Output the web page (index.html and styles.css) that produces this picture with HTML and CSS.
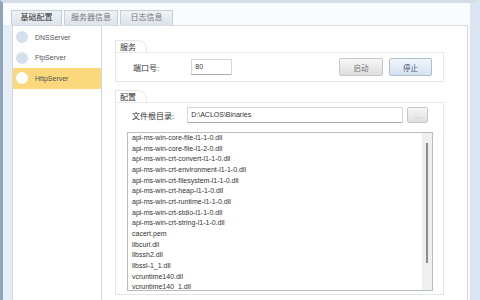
FILE: index.html
```html
<!DOCTYPE html>
<html lang="zh-CN">
<head>
    <meta charset="UTF-8">
    <title>服务器配置</title>
    <link rel="stylesheet" href="styles.css">
</head>
<body>
    <div class="window">
        <div class="tabs">
            <div class="tab active">基础配置</div>
            <div class="tab">服务器信息</div>
            <div class="tab">日志信息</div>
        </div>
        <div class="main">
            <ul class="server-list">
                <li class="server"><span class="dot"></span>DNSServer</li>
                <li class="server"><span class="dot"></span>FtpServer</li>
                <li class="server selected"><span class="dot"></span>HttpServer</li>
            </ul>
            <div class="panel">
                <div class="group">
                    <div class="group-title">服务</div>
                    <div class="group-body service-row">
                        <label class="field-label">端口号:</label>
                        <div class="input port">80</div>
                        <div class="spacer"></div>
                        <button class="btn">启动</button>
                        <button class="btn btn-blue">停止</button>
                    </div>
                </div>
                <div class="group">
                    <div class="group-title">配置</div>
                    <div class="group-body config-body">
                        <div class="path-row">
                            <label class="field-label">文件根目录:</label>
                            <div class="input path">D:\ACLOS\Binaries</div>
                            <button class="btn btn-small">...</button>
                        </div>
                        <div class="file-box">
                            <ul class="file-list" id="fileList"></ul>
                            <div class="scrollbar"><div class="thumb"></div></div>
                        </div>
                    </div>
                </div>
            </div>
        </div>
    </div>

    <script>
        const files = [
            'api-ms-win-core-file-l1-1-0.dll',
            'api-ms-win-core-file-l1-2-0.dll',
            'api-ms-win-crt-convert-l1-1-0.dll',
            'api-ms-win-crt-environment-l1-1-0.dll',
            'api-ms-win-crt-filesystem-l1-1-0.dll',
            'api-ms-win-crt-heap-l1-1-0.dll',
            'api-ms-win-crt-runtime-l1-1-0.dll',
            'api-ms-win-crt-stdio-l1-1-0.dll',
            'api-ms-win-crt-string-l1-1-0.dll',
            'cacert.pem',
            'libcurl.dll',
            'libssh2.dll',
            'libssl-1_1.dll',
            'vcruntime140.dll',
            'vcruntime140_1.dll'
        ];
        const fileList = document.getElementById('fileList');
        files.forEach(name => {
            const li = document.createElement('li');
            li.textContent = name;
            fileList.appendChild(li);
        });
    </script>
</body>
</html>
```

FILE: styles.css
```css
* { margin: 0; padding: 0; box-sizing: border-box; }
body { width: 480px; height: 300px; overflow: hidden; background: #fff; font-family: "Liberation Sans", "Noto Sans CJK SC", sans-serif; color: #444; }
.window { height: 300px; display: flex; flex-direction: column; border-top: 3px solid #d3dde8; border-left: 3px solid #8ea4bc; border-right: 10px solid #d9e5f1; background: #fafbfd; }
.tabs { display: flex; gap: 2px; height: 22px; padding: 7px 0 0 8px; }
.tab { width: 54px; height: 15px; text-align: center; line-height: 14px; font-size: 8px; white-space: nowrap; color: #777; background: linear-gradient(#eef2f6, #dde3ea); border: 1px solid #c6cfd8; border-bottom: none; }
.tab.active { width: 51px; color: #333; }
.tab:last-child { width: 53px; }
.main { flex: 1; display: flex; border-left: 9px solid #e6edf5; min-height: 0; }
.server-list { list-style: none; width: 90px; background: #fff; border: 1px solid #d3d9df; border-bottom: none; padding-top: 1px; }
.server { height: 20.5px; display: flex; align-items: center; gap: 7px; padding-left: 3px; font-size: 7px; color: #555; }
.server.selected { background: #fbd87c; }
.dot { width: 12px; height: 12px; border-radius: 50%; background: #d4e0ec; }
.server.selected .dot { background: #fff; }
.panel { width: 366px; background: #fff; border-top: 1px solid #d5dbe1; border-right: 1px solid #d5dbe1; padding: 14px 0 0 13px; margin-right: 2px; }
.group { width: 329px; margin-bottom: 8px; }
.group-title { width: 32px; height: 12px; padding-left: 4px; font-size: 8px; line-height: 13px; color: #333; border: 1px solid #e3e7eb; border-bottom: none; border-top-right-radius: 9px; }
.group-body { border: 1px solid #e3e7eb; border-top-color: #e8ebee; }
.service-row { height: 30px; display: flex; align-items: center; padding: 0 11px 0 17px; }
.field-label { font-size: 8px; color: #333; }
.input { height: 16px; border: 1px solid #d4d8dc; border-bottom-color: #a9aeb3; font-size: 7px; line-height: 14px; padding-left: 3px; color: #333; background: #fff; }
.port { width: 41px; margin-left: 32px; }
.spacer { flex: 1; }
.btn { width: 44px; height: 18px; margin-left: 6px; border: 1px solid #c5c9ce; border-radius: 2px; background: linear-gradient(#f7f7f7, #dedede); font-family: "Noto Sans CJK SC", sans-serif; font-size: 7.5px; color: #777; }
.btn-blue { width: 43px; border-color: #aebfd0; background: linear-gradient(#f1f6fb, #d3e2f0); color: #557; }
.config-body { height: 193px; padding: 4px 10px 0 11px; }
.path-row { display: flex; align-items: center; height: 16px; }
.path-row .field-label { padding-left: 5px; }
.path { width: 216px; margin-left: 13px; }
.btn-small { width: 21px; height: 16px; margin-left: 4px; color: #bbb; font-family: "Liberation Sans", sans-serif; }
.file-box { margin-top: 9px; width: 306px; height: 159px; border: 1px solid #b9bcbf; display: flex; background: #fff; }
.file-list { flex: 1; list-style: none; padding-left: 4px; font-size: 7px; line-height: 10.65px; color: #333; overflow: hidden; }
.scrollbar { width: 10px; background: #eeeff0; position: relative; }
.thumb { position: absolute; left: 4px; top: 10px; width: 2px; height: 120px; background: #8c8c8c; }
```
